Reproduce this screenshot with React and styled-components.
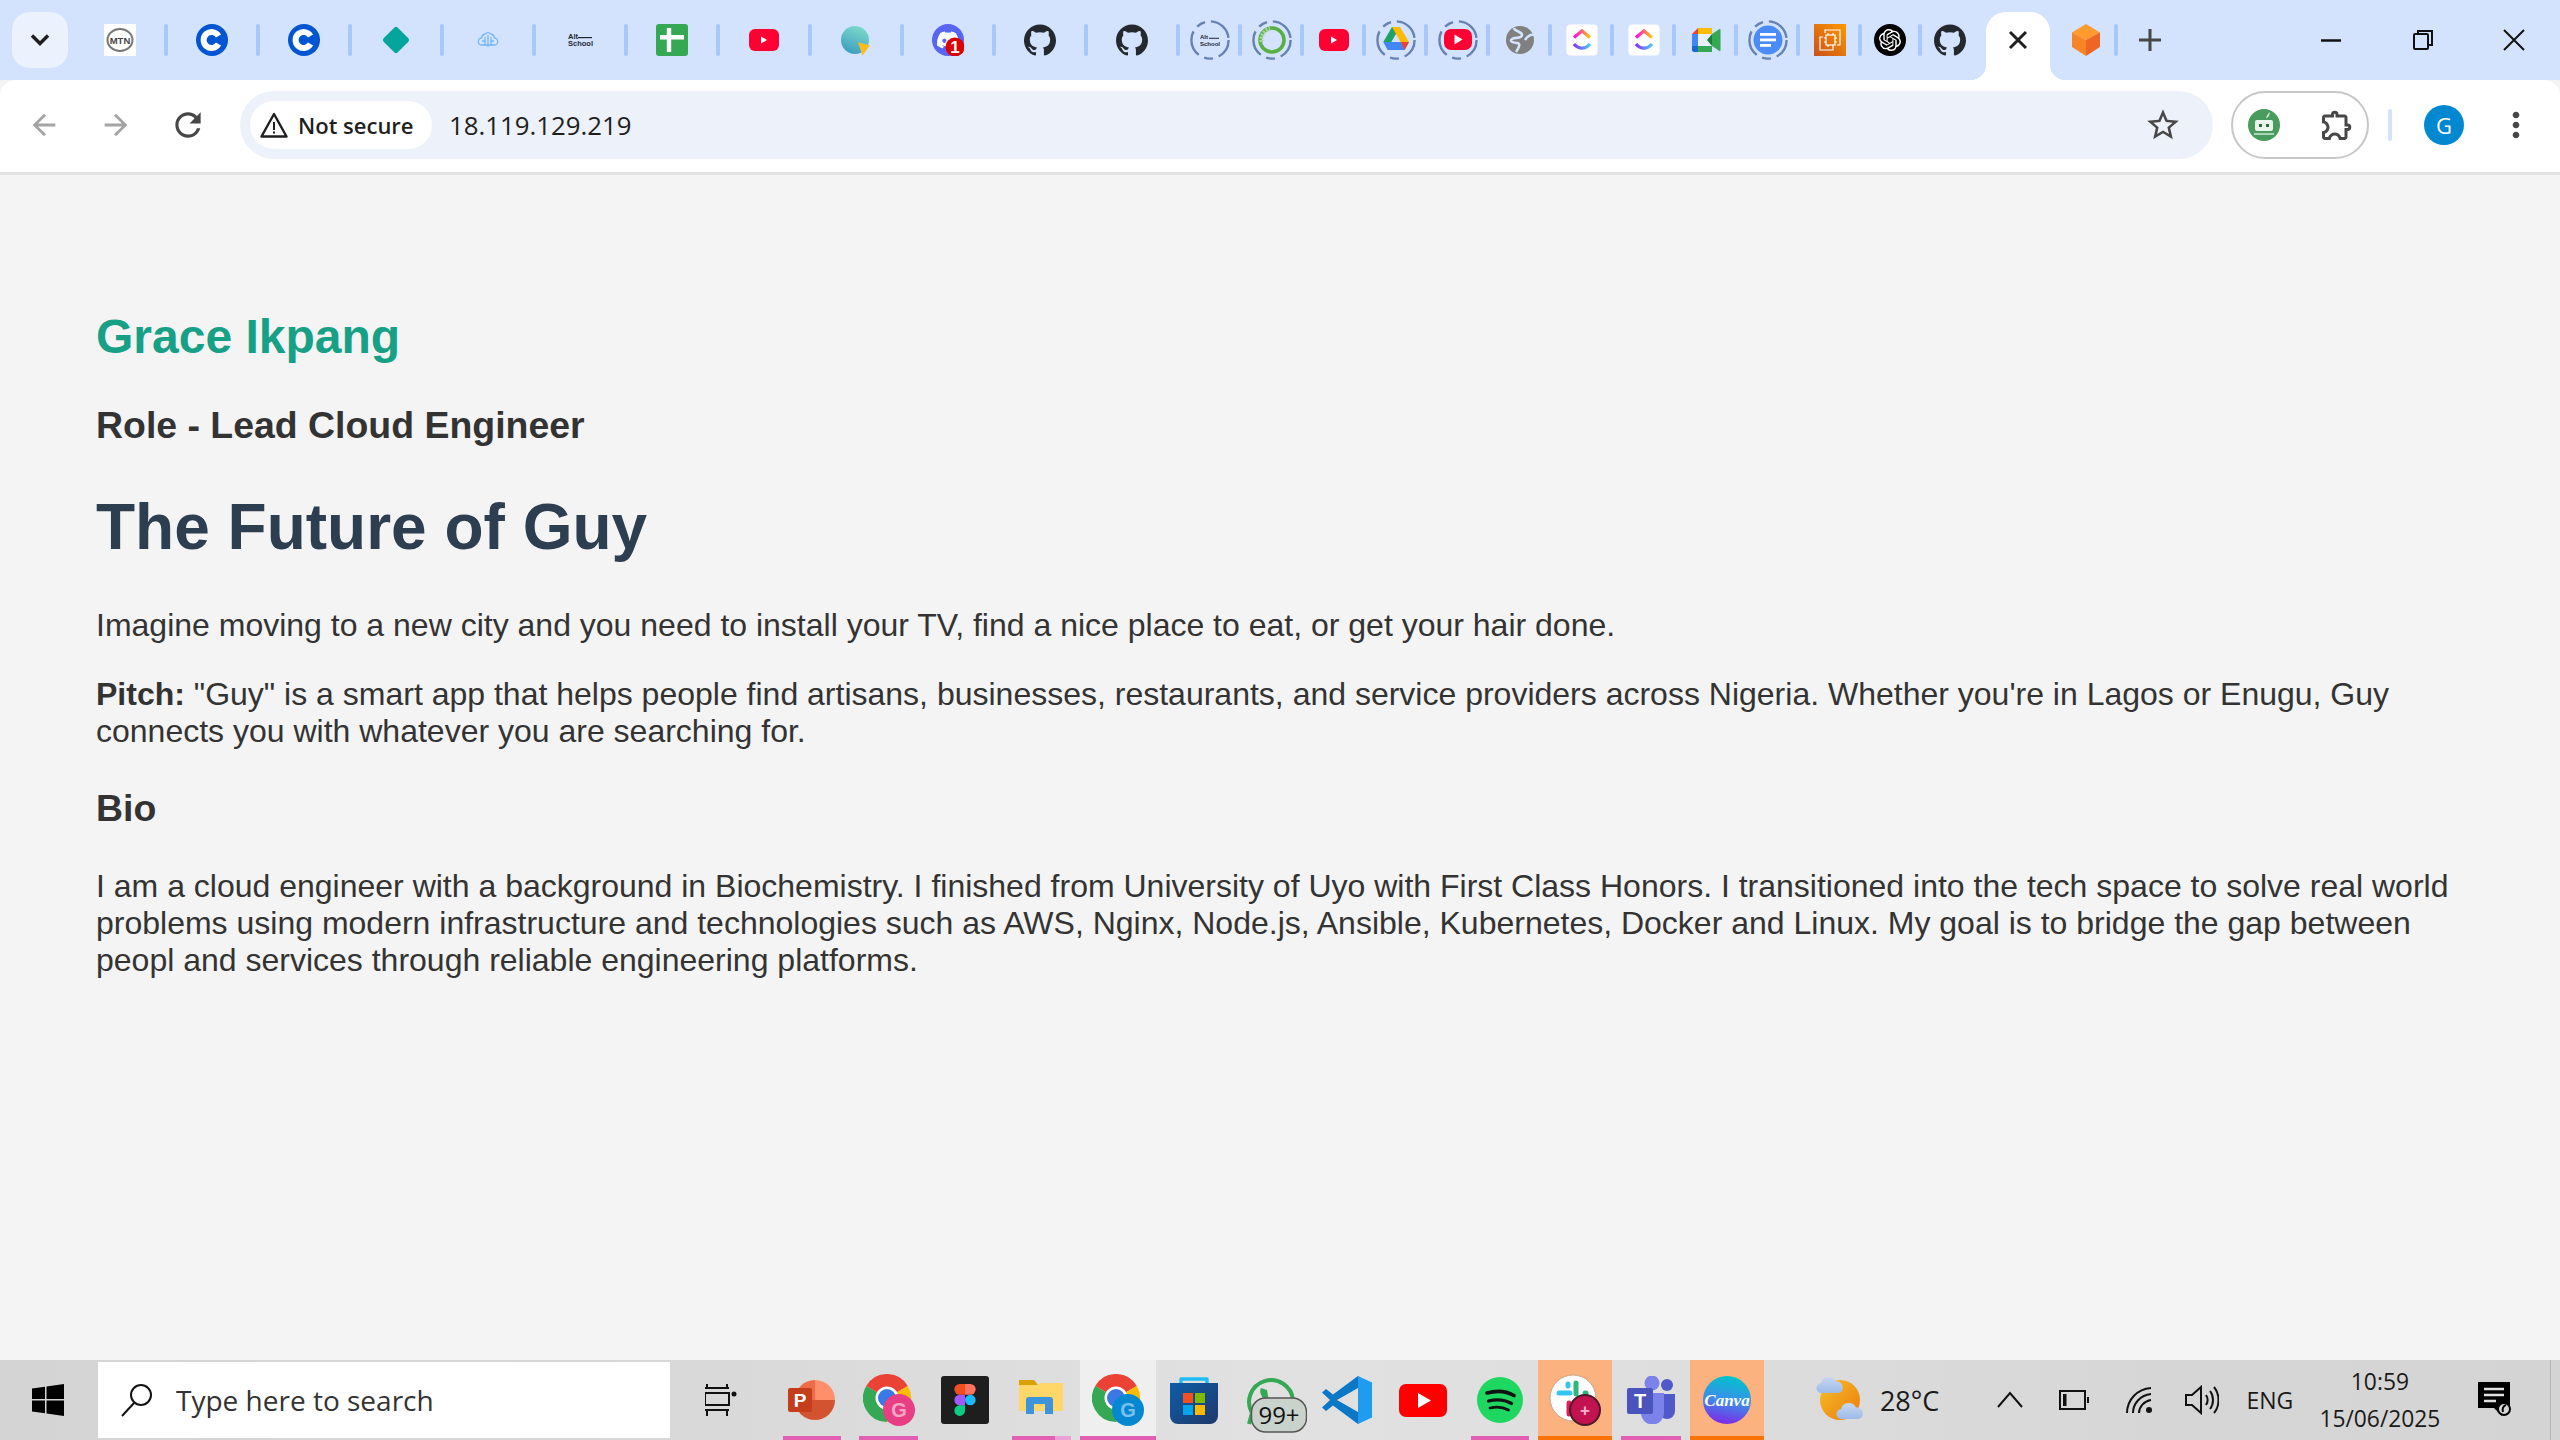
import React from 'react'
import styled, { createGlobalStyle } from 'styled-components'
import { SiGithub, SiOpenai, SiDiscord } from 'react-icons/si'
import { MdArrowBack, MdArrowForward, MdRefresh, MdStarBorder, MdOutlineExtension, MdMoreVert } from 'react-icons/md'

const UI_FONT = '"Open Sans", "Noto Sans", sans-serif'

const GlobalStyle = createGlobalStyle`
  html, body { margin: 0; padding: 0; height: 100%; overflow: hidden; }
  body { background: #f4f4f4; }
  #root { height: 100%; }
  * { box-sizing: border-box; }
`

const Screen = styled.div`
  display: flex;
  flex-direction: column;
  height: 1440px;
  width: 2560px;
`

/* ---- tab strip ---- */
const TabStrip = styled.div`
  display: flex;
  align-items: center;
  height: 80px;
  background: #d3e3fd;
  flex-shrink: 0;
`
const TabSearch = styled.div`
  width: 56px;
  height: 56px;
  margin: 0 8px 0 12px;
  border-radius: 18px;
  background: #ecf2fd;
  display: flex;
  align-items: center;
  justify-content: center;
`
const Tab = styled.div`
  width: ${p => p.$w || 58}px;
  margin-right: ${p => p.$mr || 0}px;
  padding-left: ${p => p.$pl || 0}px;
  height: 40px;
  display: flex;
  align-items: center;
  justify-content: center;
  flex-shrink: 0;
`
const TabSep = styled.div`
  width: 4px;
  height: 32px;
  border-radius: 2px;
  background: #a8c7fa;
  flex-shrink: 0;
`
const ActiveTab = styled.div`
  position: relative;
  width: 64px;
  height: 68px;
  margin-top: 12px;
  background: #fff;
  border-radius: 20px 20px 0 0;
  display: flex;
  align-items: center;
  justify-content: center;
  padding-bottom: 12px;
  flex-shrink: 0;
  &::before, &::after {
    content: '';
    position: absolute;
    bottom: 0;
    width: 16px;
    height: 16px;
  }
  &::before { left: -16px; background: radial-gradient(circle at 0 0, #d3e3fd 16px, #fff 16.5px); }
  &::after { right: -16px; background: radial-gradient(circle at 100% 0, #d3e3fd 16px, #fff 16.5px); }
`
const NewTab = styled.div`
  width: 64px;
  display: flex;
  justify-content: center;
`
const WindowControls = styled.div`
  display: flex;
  margin-left: auto;
`
const WindowButton = styled.div`
  width: 91.6px;
  height: 80px;
  display: flex;
  align-items: center;
  justify-content: center;
`

/* ---- toolbar ---- */
const Toolbar = styled.div`
  display: flex;
  align-items: center;
  height: 95px;
  padding: 0 0 3px 8px;
  background: #fff;
  border-bottom: 3px solid #e2e2e2;
  border-radius: 16px 16px 0 0;
  flex-shrink: 0;
`
const NavButton = styled.div`
  width: 72px;
  display: flex;
  justify-content: center;
  color: ${p => p.$dim ? '#a4a4a4' : '#474747'};
`
const Omnibox = styled.div`
  display: flex;
  align-items: center;
  width: 1973px;
  height: 68px;
  margin-left: 16px;
  padding: 0 31px 0 10px;
  border-radius: 34px;
  background: #edf2fa;
  flex-shrink: 0;
`
const SecurityChip = styled.div`
  display: flex;
  align-items: center;
  gap: 9px;
  width: 182px;
  height: 48px;
  padding-left: 9px;
  border-radius: 24px;
  background: #fff;
  font: 600 22px ${UI_FONT};
  color: #1f1f1f;
  white-space: nowrap;
`
const Url = styled.div`
  margin-left: 17px;
  font: 400 25.8px ${UI_FONT};
  color: #1f1f1f;
`
const StarWrap = styled.div`
  margin-left: auto;
  display: flex;
  color: #474747;
`
const ExtensionPill = styled.div`
  display: flex;
  align-items: center;
  width: 138px;
  height: 68px;
  margin-left: 18px;
  padding: 0 12px 0 15px;
  justify-content: space-between;
  border: 2px solid #c7c7c7;
  border-radius: 34px;
  color: #474747;
  flex-shrink: 0;
`
const ToolbarSep = styled.div`
  width: 4px;
  height: 32px;
  margin: 0 32px 0 19px;
  border-radius: 2px;
  background: #d3e3fd;
`
const Avatar = styled.div`
  width: 40px;
  height: 40px;
  border-radius: 50%;
  background: #0288d1;
  color: #fff;
  display: flex;
  align-items: center;
  justify-content: center;
  font: 400 22px ${UI_FONT};
`
const MenuButton = styled.div`
  display: flex;
  margin-left: 32px;
  color: #474747;
`

/* ---- page content ---- */
const Page = styled.main`
  flex: 1;
  padding: 94.5px 96px 0;
  background: #f4f4f4;
  font-family: "Liberation Sans", Arial, sans-serif;
  font-size: 32px;
  color: #333;
  overflow: hidden;
`
const Name = styled.h2`
  font-size: 48px;
  margin: 39.84px 0;
  color: #16a085;
`
const Subheading = styled.h3`
  font-size: 37.44px;
  margin: 37.44px 0;
  color: #333;
`
const Title = styled.h1`
  font-size: 64px;
  margin: 42.88px 0;
  color: #2c3e50;
`
const Paragraph = styled.p`
  margin: 32px 0;
`

/* ---- taskbar ---- */
const Taskbar = styled.footer`
  display: flex;
  height: 80px;
  flex-shrink: 0;
  background: linear-gradient(90deg, #d4d4d4 0%, #d8d8d8 25%, #e1e1e1 50%, #dfdfdf 62%, #d6d6d6 85%, #d4d4d4 100%);
`
const StartButton = styled.div`
  width: 98px;
  display: flex;
  align-items: center;
  justify-content: center;
  padding-right: 2px;
`
const SearchBox = styled.div`
  width: 572px;
  height: 76px;
  margin-top: 2px;
  background: #fff;
  display: flex;
  align-items: center;
  gap: 21px;
  padding-left: 21px;
  font: 400 28px ${UI_FONT};
  color: #333;
`
const TaskView = styled.div`
  width: 104px;
  display: flex;
  align-items: center;
  justify-content: center;
  padding-right: 2px;
`
const TaskSlot = styled.div`
  position: relative;
  width: ${p => p.$w || 76.4}px;
  height: 80px;
  display: flex;
  align-items: center;
  justify-content: center;
  background: ${p => p.$bg || 'transparent'};
  &::after {
    content: '';
    display: ${p => p.$line ? 'block' : 'none'};
    position: absolute;
    bottom: 0;
    left: ${p => p.$full ? 0 : '9px'};
    right: ${p => p.$full ? 0 : '9px'};
    height: 4px;
    background: ${p => p.$tail ? 'linear-gradient(90deg, #e25fb4 73%, #eda0d6 73%)' : p.$line};
  }
`
const Weather = styled.div`
  display: flex;
  align-items: center;
  gap: 16px;
  margin-left: 52px;
  width: 162px;
  font: 400 27px ${UI_FONT};
  color: #1a1a1a;
`
const TrayItem = styled.div`
  width: ${p => p.$w}px;
  display: flex;
  align-items: center;
  justify-content: center;
  font: 400 23px ${UI_FONT};
  color: #1a1a1a;
`
const Clock = styled.div`
  width: 144px;
  display: flex;
  flex-direction: column;
  align-items: center;
  justify-content: center;
  font: 400 22.8px/37px ${UI_FONT};
  color: #1a1a1a;
`
const ShowDesktop = styled.div`
  flex: 1;
  margin-left: 14px;
  border-left: 1px solid #b4b4b4;
`

/* ---- tab icons, 32px unless noted ---- */
const Mtn = () => (
  <svg width="32" height="32" viewBox="0 0 32 32">
    <rect width="32" height="32" fill="#fff" />
    <ellipse cx="16" cy="16" rx="12.5" ry="11" fill="none" stroke="#777" strokeWidth="2" />
    <text x="16" y="19.5" textAnchor="middle" fontFamily="Liberation Sans" fontWeight="700" fontSize="9.5" fill="#444">MTN</text>
  </svg>
)
const Coursera = () => (
  <svg width="32" height="32" viewBox="0 0 32 32">
    <circle cx="16" cy="16" r="16" fill="#0056d2" />
    <path d="M22.5 12 A8 8 0 1 0 22.5 20" fill="none" stroke="#fff" strokeWidth="6" />
  </svg>
)
const Diamond = () => (
  <svg width="32" height="32" viewBox="0 0 32 32">
    <rect x="6" y="6" width="20" height="20" rx="2.5" fill="#04a59d" transform="rotate(45 16 16)" />
  </svg>
)
const BrainCloud = () => (
  <svg width="32" height="32" viewBox="0 0 32 32" fill="none" stroke="#74b6f8" strokeWidth="1.3">
    <path d="M10 21a3.500 3.500 0 0 1-.5-7 4.500 4.500 0 0 1 3.500-4 4 4 0 0 1 6 0 4.500 4.500 0 0 1 3.500 4 3.500 3.500 0 0 1-.5 7z" />
    <path d="M13 13v9M16 11v12M19 13v9M10 17h3M19 17h3" />
  </svg>
)
const AltSchoolText = ({ size = 32 }) => (
  <svg width={size} height={size} viewBox="0 0 32 32">
    <text x="4" y="14.5" fontFamily="Liberation Sans" fontWeight="700" fontSize="7.5" fill="#1d2733">Alt</text>
    <rect x="14" y="13" width="14" height="1.2" fill="#1d2733" />
    <text x="4" y="22" fontFamily="Liberation Sans" fontWeight="700" fontSize="7.5" fill="#1d2733">School</text>
  </svg>
)
const GreenPlus = () => (
  <svg width="32" height="32" viewBox="0 0 32 32">
    <rect width="32" height="32" rx="3" fill="#34a853" />
    <path d="M10.8 4h4.4v7h12.8v4.4H15.2V28h-4.4V15.4H4V11h6.8z" fill="#fff" />
  </svg>
)
const SmallYoutube = ({ w = 32 }) => (
  <svg width={w} height="32" viewBox="0 0 32 32">
    <rect x="1" y="5" width="30" height="22" rx="6" fill="#ff0033" />
    <path d="M13 12.5l6 3.5-6 3.5z" fill="#fff" />
  </svg>
)
const TealOrb = () => (
  <svg width="32" height="32" viewBox="0 0 32 32">
    <defs>
      <linearGradient id="orb" x1="0.7" y1="0" x2="0.3" y2="1">
        <stop offset="0" stopColor="#7edbcb" />
        <stop offset="1" stopColor="#3b9cc0" />
      </linearGradient>
    </defs>
    <circle cx="15" cy="16" r="14" fill="url(#orb)" />
    <path d="M18 18l12 3.5-7.5 10z" fill="#fdbb1e" />
  </svg>
)
const Discord = () => (
  <svg width="32" height="32" viewBox="0 0 32 32">
    <circle cx="16" cy="16" r="16" fill="#5865f2" />
    <SiDiscord x="5" y="5" size="22" color="#fff" />
    <circle cx="23" cy="23" r="9.5" fill="#dc0000" />
    <text x="23" y="29" textAnchor="middle" fontFamily="Liberation Sans" fontWeight="700" fontSize="17" fill="#fff">1</text>
  </svg>
)
const Github = () => <SiGithub size={32} color="#24292f" />

// dashed ring used for tab groups
const Ring = ({ children }) => (
  <svg width="40" height="40" viewBox="0 0 40 40">
    <circle cx="20" cy="20" r="18.6" fill="none" stroke="#6582b2" strokeWidth="2.4" strokeDasharray="26 6 9 6" strokeDashoffset="6" />
    {children}
  </svg>
)
const RingAlt = () => (
  <Ring>
    <text x="10" y="19" fontFamily="Liberation Sans" fontWeight="700" fontSize="6" fill="#1d2733">Alt</text>
    <rect x="19" y="17.8" width="10" height="1" fill="#1d2733" />
    <text x="10" y="25.5" fontFamily="Liberation Sans" fontWeight="700" fontSize="6" fill="#1d2733">School</text>
  </Ring>
)
const RingGreen = () => (
  <Ring>
    <circle cx="20" cy="20" r="12" fill="none" stroke="#58b044" strokeWidth="3.6" />
    <path d="M9.5 22 A12 12 0 0 1 18 8.5" fill="none" stroke="#a8d49c" strokeWidth="4" strokeDasharray="2 1.2" />
  </Ring>
)
const RingDrive = () => (
  <Ring>
    <path d="M16 7h8l-8.7 15h-8z" fill="#1ea362" />
    <path d="M16 7h8l9 15h-8.3z" fill="#ffba00" />
    <path d="M7.3 22H33l-4.4 8H11.6z" fill="#4285f4" />
    <path d="M24.7 22H33l-4.4 8z" fill="#ea4335" />
  </Ring>
)
const RingYoutube = () => (
  <Ring>
    <rect x="6" y="9" width="28" height="21" rx="7" fill="#ff0033" />
    <path d="M16.5 14.5l8 5-8 5z" fill="#fff" />
  </Ring>
)
const GrayGlobe = () => (
  <svg width="32" height="32" viewBox="0 0 32 32">
    <circle cx="16" cy="16" r="14" fill="#808080" />
    <path d="M10 4c1 4 8 3 8 7s-7 2-10 4 1 4 5 4 2 5-1 9M30 11c-4-1-7 2-9 5" fill="none" stroke="#d3e3fd" strokeWidth="2.600" />
  </svg>
)
const ClickUp = () => (
  <svg width="32" height="32" viewBox="0 0 32 32">
    <defs>
      <linearGradient id="cuTop" x1="0" y1="0" x2="1" y2="0">
        <stop offset="0" stopColor="#ff02f0" />
        <stop offset="1" stopColor="#ffc800" />
      </linearGradient>
      <linearGradient id="cuBottom" x1="0" y1="0" x2="1" y2="0">
        <stop offset="0" stopColor="#8930fd" />
        <stop offset="1" stopColor="#49ccf9" />
      </linearGradient>
    </defs>
    <rect x="0.5" y="0.5" width="31" height="31" rx="4" fill="#fff" />
    <path d="M8 13.500l8-6.500 8 6.500" fill="none" stroke="url(#cuTop)" strokeWidth="3.400" />
    <path d="M8 20c4.500 5.500 11.500 5.500 16 0" fill="none" stroke="url(#cuBottom)" strokeWidth="3.400" />
  </svg>
)
const Meet = () => (
  <svg width="32" height="32" viewBox="0 0 32 32">
    <rect x="8" y="10" width="14" height="12" fill="#e8f0fd" />
    <path d="M2 10h6v12H2z" fill="#4285f4" />
    <path d="M8 4h14v6H8z" fill="#fbbc04" />
    <path d="M8 4v6H2z" fill="#ea4335" />
    <path d="M2 22h6v6H4a2 2 0 0 1-2-2z" fill="#1967d2" />
    <path d="M8 22h14v6H8z" fill="#34a853" />
    <path d="M22 10l7.500-5q1-.5 1 1v20q0 1.500-1 1L22 22z" fill="#34a853" />
    <path d="M22 10v12l-5-6z" fill="#188038" />
  </svg>
)
const RingDocs = () => (
  <Ring>
    <circle cx="20" cy="20" r="14.500" fill="#4b8bf5" />
    <rect x="12" y="13" width="16" height="2.800" fill="#fff" />
    <rect x="12" y="18.500" width="16" height="2.800" fill="#fff" />
    <rect x="12" y="24" width="11" height="2.800" fill="#fff" />
  </Ring>
)
const Ec2 = () => (
  <svg width="32" height="32" viewBox="0 0 32 32">
    <defs>
      <linearGradient id="ec2" x1="0" y1="1" x2="1" y2="0">
        <stop offset="0" stopColor="#c8511b" />
        <stop offset="1" stopColor="#ff9900" />
      </linearGradient>
    </defs>
    <rect width="32" height="32" fill="url(#ec2)" />
    <g fill="none" stroke="#fff" strokeWidth="1.200">
      <path d="M11 9V6h15v15h-3M9 13H6v13h13v-3" />
      <rect x="12" y="11" width="9" height="10" />
      <path d="M14 9v2M19 9v2M14 21v2M19 21v2M10 14h2M10 18h2M21 14h2M21 18h2" />
    </g>
  </svg>
)
const OpenAi = () => (
  <svg width="32" height="32" viewBox="0 0 32 32">
    <circle cx="16" cy="16" r="16" fill="#000" />
    <SiOpenai x="5" y="5" size="22" color="#fff" />
  </svg>
)
const Cube = () => (
  <svg width="32" height="32" viewBox="0 0 32 32">
    <path d="M16 0l14 8.500L16 16 2 8.500z" fill="#ff9a2c" />
    <path d="M2 8.500L16 16v16L2 23z" fill="#f78427" />
    <path d="M30 8.500L16 16v16l14-9z" fill="#ef6523" />
  </svg>
)

/* ---- taskbar icons, 48px ---- */
const Powerpoint = () => (
  <svg width="48" height="48" viewBox="0 0 48 48">
    <path d="M27 4a20 20 0 0 1 20 20H27z" fill="#ff8f6b" />
    <path d="M27 4a20 20 0 0 0-20 20h20z" fill="#ed6c47" />
    <path d="M7 24a20 20 0 0 0 40 0z" fill="#d35230" />
    <rect x="0" y="12" width="24" height="24" rx="2" fill="#c43e1c" />
    <text x="12" y="31" textAnchor="middle" fontFamily="Liberation Sans" fontWeight="700" fontSize="19" fill="#fff">P</text>
  </svg>
)
const ChromeProfile = ({ color, text }) => (
  <svg width="52" height="52" viewBox="0 0 52 52">
    <path d="M24 24L3.200 12A24 24 0 0 1 44.800 12z" fill="#ea4335" />
    <path d="M24 24L44.800 12A24 24 0 0 1 24 48z" fill="#fbbc04" />
    <path d="M24 24L24 48A24 24 0 0 1 3.200 12z" fill="#34a853" />
    <circle cx="24" cy="24" r="11.500" fill="#fff" />
    <circle cx="24" cy="24" r="9" fill="#3b78e7" />
    <circle cx="36" cy="36" r="16" fill={color} />
    <text x="36" y="43" textAnchor="middle" fontFamily="Liberation Sans" fontWeight="700" fontSize="20" fill={text}>G</text>
  </svg>
)
const Figma = () => (
  <svg width="48" height="48" viewBox="0 0 48 48">
    <rect width="48" height="48" rx="3" fill="#1e1e1e" />
    <path d="M24 8h-5.300a5.300 5.300 0 0 0 0 10.700H24z" fill="#f24e1e" />
    <path d="M24 8h5.300a5.300 5.300 0 0 1 0 10.700H24z" fill="#ff7262" />
    <path d="M24 18.700h-5.300a5.300 5.300 0 0 0 0 10.700H24z" fill="#a259ff" />
    <circle cx="29.300" cy="24" r="5.300" fill="#1abcfe" />
    <path d="M24 29.300h-5.300a5.300 5.300 0 1 0 5.300 5.300z" fill="#0acf83" />
  </svg>
)
const Explorer = () => (
  <svg width="44" height="44" viewBox="0 0 44 44">
    <path d="M0 2h15l4 5h-19z" fill="#d9a200" />
    <path d="M0 7h19l3-2h22v26a2 2 0 0 1-2 2H2a2 2 0 0 1-2-2z" fill="#ffd769" />
    <path d="M7 36V22a3 3 0 0 1 3-3h21a3 3 0 0 1 3 3v14h-8v-10h-11v10z" fill="#3d93dc" />
  </svg>
)
const Store = () => (
  <svg width="48" height="48" viewBox="0 0 48 48">
    <defs>
      <linearGradient id="storeBag" x1="0" y1="0" x2="1" y2="1">
        <stop offset="0" stopColor="#0d5ea8" />
        <stop offset="1" stopColor="#21376b" />
      </linearGradient>
    </defs>
    <path d="M11 10V3h26v7" fill="none" stroke="#1ebcf5" strokeWidth="3.400" strokeLinejoin="round" />
    <path d="M0 7h48v33a8 8 0 0 1-8 8H8a8 8 0 0 1-8-8z" fill="url(#storeBag)" />
    <rect x="13" y="17" width="10" height="10" fill="#f25022" />
    <rect x="25" y="17" width="10" height="10" fill="#7fba00" />
    <rect x="13" y="29" width="10" height="10" fill="#00a4ef" />
    <rect x="25" y="29" width="10" height="10" fill="#ffb900" />
  </svg>
)
const Whatsapp = () => (
  <svg width="72" height="66" viewBox="0 0 72 66">
    <path d="M14 57l3-11A22 22 0 1 1 58 33" fill="none" stroke="#36a853" strokeWidth="4" />
    <path d="M26 21c-2 3 0 8 3 11l5 3-2-12z" fill="#36a853" />
    <rect x="16.500" y="31" width="55" height="34" rx="14" fill="#c9d3cb" stroke="#555" strokeWidth="1.500" />
    <text x="44" y="57" textAnchor="middle" fontFamily='"Open Sans"' fontWeight="400" fontSize="24" fill="#111">99+</text>
  </svg>
)
const VsCode = () => (
  <svg width="50" height="48" viewBox="0 0 50 48">
    <path d="M36 0l14 6.500v35L36 48z" fill="#1f9cf0" />
    <path d="M36 0v12L15 24 36 36v12L11 29.500 4 35 0 31.500 8 24 0 16.500 4 13l7 5.500z" fill="#0a78c6" />
  </svg>
)
const BigYoutube = () => (
  <svg width="48" height="48" viewBox="0 0 48 48">
    <rect x="0" y="8" width="48" height="33" rx="7" fill="#ff0000" />
    <path d="M19 17l13 7.500L19 32z" fill="#fff" />
  </svg>
)
const Spotify = () => (
  <svg width="46" height="46" viewBox="0 0 46 46">
    <circle cx="23" cy="23" r="23" fill="#1ed760" />
    <g fill="none" stroke="#121212" strokeLinecap="round">
      <path d="M10 16c9-2.500 19-2 27 2.500" strokeWidth="3.600" />
      <path d="M11.500 24c8-2 16-1.500 23 2.500" strokeWidth="3.200" />
      <path d="M13 31c6.500-1.500 13-1 18.500 2" strokeWidth="2.700" />
    </g>
  </svg>
)
const Slack = () => (
  <svg width="52" height="52" viewBox="0 0 52 52">
    <circle cx="24" cy="24" r="23" fill="#fff" stroke="#c9a58a" strokeWidth="1" />
    <g strokeWidth="5" strokeLinecap="round" fill="none">
      <path d="M10 19h11" stroke="#36c5f0" />
      <path d="M27 9v11" stroke="#2eb67d" />
      <path d="M38 27H28" stroke="#ecb22e" />
      <path d="M20 29v11" stroke="#e01e5a" />
      <path d="M19 10v2" stroke="#36c5f0" />
      <path d="M36 19h1" stroke="#2eb67d" />
    </g>
    <circle cx="36" cy="36" r="15" fill="#c2124f" stroke="#4a1a28" strokeWidth="2" />
    <text x="36" y="42" textAnchor="middle" fontFamily="Liberation Sans" fontWeight="700" fontSize="17" fill="#f7b4cb">+</text>
  </svg>
)
const Teams = () => (
  <svg width="48" height="48" viewBox="0 0 48 48">
    <circle cx="40" cy="9" r="6" fill="#5059c9" />
    <path d="M32 18h16v17a8 8 0 0 1-16 0z" fill="#5059c9" />
    <circle cx="25" cy="7" r="7.500" fill="#7b83eb" />
    <path d="M14 17h23v20a11.500 11.500 0 0 1-23 0z" fill="#7b83eb" />
    <rect x="0" y="12" width="26" height="26" rx="2" fill="#4b53bc" />
    <text x="13" y="32" textAnchor="middle" fontFamily="Liberation Sans" fontWeight="700" fontSize="20" fill="#fff">T</text>
  </svg>
)
const Canva = () => (
  <svg width="48" height="48" viewBox="0 0 48 48">
    <defs>
      <linearGradient id="canva" x1="0.6" y1="0" x2="0.4" y2="1">
        <stop offset="0" stopColor="#00c4cc" />
        <stop offset="0.5" stopColor="#3a8fe8" />
        <stop offset="1" stopColor="#7d2ae8" />
      </linearGradient>
    </defs>
    <circle cx="24" cy="24" r="24" fill="url(#canva)" />
    <text x="24" y="29.500" textAnchor="middle" fontFamily="Liberation Serif" fontStyle="italic" fontWeight="700" fontSize="17" fill="#fff">Canva</text>
  </svg>
)
const WeatherIcon = () => (
  <svg width="48" height="48" viewBox="0 0 48 48">
    <defs>
      <linearGradient id="sun" x1="0" y1="0" x2="1" y2="1">
        <stop offset="0" stopColor="#f5c02a" />
        <stop offset="1" stopColor="#ee7a0c" />
      </linearGradient>
      <linearGradient id="cloud" x1="0" y1="0" x2="0" y2="1">
        <stop offset="0" stopColor="#c6d8f2" />
        <stop offset="1" stopColor="#9dbbe8" />
      </linearGradient>
    </defs>
    <circle cx="24" cy="24" r="20" fill="url(#sun)" />
    <path id="cloudTop" d="M6 17a5 5 0 0 1-1-10 8 8 0 0 1 15-1.500A6 6 0 0 1 23 17z" fill="url(#cloud)" />
    <path d="M26 43a5 5 0 0 1-1-10 8 8 0 0 1 15-1.500A6 6 0 0 1 43 43z" fill="url(#cloud)" />
  </svg>
)

const tabs = [
  [<Mtn />, 88], [<Coursera />, 88], [<Coursera />, 88], [<Diamond />, 88], [<BrainCloud />, 88], [<AltSchoolText />, 88],
  [<GreenPlus />, 88], [<SmallYoutube />, 88], [<TealOrb />, 88], [<Discord />, 88], [<Github />, 88], [<Github />, 88],
  [<RingAlt />, 58, 2], [<RingGreen />, 58, 2], [<SmallYoutube />, 58, 2], [<RingDrive />, 58, 2], [<RingYoutube />, 58, 2], [<GrayGlobe />, 58, 2],
  [<ClickUp />, 58, 2], [<ClickUp />, 58, 2], [<Meet />, 58, 2], [<RingDocs />, 58, 2], [<Ec2 />, 58, 2], [<OpenAi />, 56],
]

const slots = [
  { icon: <Powerpoint />, line: '#e25fb4' },
  { icon: <ChromeProfile color="#e83e83" text="#f5a6c6" />, line: '#e25fb4' },
  { icon: <Figma /> },
  { icon: <Explorer />, line: '#e25fb4', tail: true },
  { icon: <ChromeProfile color="#0688d1" text="#7cc0ec" />, line: '#e25fb4', bg: '#efefef', full: true },
  { icon: <Store /> },
  { icon: <Whatsapp /> },
  { icon: <VsCode /> },
  { icon: <BigYoutube /> },
  { icon: <Spotify />, line: '#e25fb4' },
  { icon: <Slack />, line: '#f97306', bg: '#fbb27e', full: true, w: 74 },
  { icon: <Teams />, line: '#e25fb4', w: 78 },
  { icon: <Canva />, line: '#f97306', bg: '#fbb27e', full: true, w: 74 },
]

export default function App() {
  return (
    <Screen>
      <GlobalStyle />
      <TabStrip>
        <TabSearch>
          <svg width="20" height="14" viewBox="0 0 20 14"><path d="M2 2.500l8 8 8-8" fill="none" stroke="#1f1f1f" strokeWidth="3.500" /></svg>
        </TabSearch>
        {tabs.map(([icon, w, pl], i) => (
          <React.Fragment key={i}>
            <Tab $w={w} $pl={pl}>{icon}</Tab>
            <TabSep />
          </React.Fragment>
        ))}
        <Tab $w={56} $mr={8}><Github /></Tab>
        <ActiveTab>
          <svg width="22" height="22" viewBox="0 0 22 22"><path d="M3 3l16 16M19 3L3 19" stroke="#1f1f1f" strokeWidth="3" /></svg>
        </ActiveTab>
        <Tab $w={64} $pl={8}><Cube /></Tab>
        <TabSep />
        <NewTab>
          <svg width="22" height="22" viewBox="0 0 22 22"><path d="M11 0v22M0 11h22" stroke="#474747" strokeWidth="3" /></svg>
        </NewTab>
        <WindowControls>
          <WindowButton>
            <svg width="20" height="3" viewBox="0 0 20 3"><path d="M0 1.500h20" stroke="#111" strokeWidth="2.500" /></svg>
          </WindowButton>
          <WindowButton>
            <svg width="20" height="20" viewBox="0 0 20 20" fill="none" stroke="#111" strokeWidth="2"><rect x="1" y="4" width="14" height="15" rx="1" /><path d="M5 4V1h14v14h-4" /></svg>
          </WindowButton>
          <WindowButton>
            <svg width="22" height="22" viewBox="0 0 22 22"><path d="M1 1l20 20M21 1L1 21" stroke="#111" strokeWidth="2" /></svg>
          </WindowButton>
        </WindowControls>
      </TabStrip>

      <Toolbar>
        <NavButton $dim><MdArrowBack size={34} /></NavButton>
        <NavButton $dim><MdArrowForward size={34} /></NavButton>
        <NavButton><MdRefresh size={38} /></NavButton>
        <Omnibox>
          <SecurityChip>
            <svg width="30" height="28" viewBox="0 0 30 28" fill="none" stroke="#1f1f1f" strokeWidth="2.400">
              <path d="M15 3L2.500 25.500h25z" strokeLinejoin="round" />
              <path d="M15 11v8M15 20.500v2" strokeWidth="2" />
            </svg>
            Not secure
          </SecurityChip>
          <Url>18.119.129.219</Url>
          <StarWrap><MdStarBorder size={38} /></StarWrap>
        </Omnibox>
        <ExtensionPill>
          <svg width="32" height="32" viewBox="0 0 32 32">
            <circle cx="16" cy="16" r="16" fill="#499c5e" />
            <path d="M18 9c1-3 2.500-5 4-6-.5 2.500-1 4.500-3 6z" fill="#d5ecd8" />
            <rect x="7" y="11" width="18" height="11" rx="2" fill="#e9f5eb" />
            <rect x="11" y="15" width="3" height="3" fill="#2c6c3d" />
            <rect x="18" y="15" width="3" height="3" fill="#2c6c3d" />
            <path d="M6 25h20" stroke="#cfe8d3" strokeWidth="1.500" />
          </svg>
          <MdOutlineExtension size={36} />
        </ExtensionPill>
        <ToolbarSep />
        <Avatar>G</Avatar>
        <MenuButton><MdMoreVert size={40} /></MenuButton>
      </Toolbar>

      <Page>
        <Name>Grace Ikpang</Name>
        <Subheading>Role - Lead Cloud Engineer</Subheading>
        <Title>The Future of Guy</Title>
        <Paragraph>Imagine moving to a new city and you need to install your TV, find a nice place to eat, or get your hair done.</Paragraph>
        <Paragraph><strong>Pitch:</strong> "Guy" is a smart app that helps people find artisans, businesses, restaurants, and service providers across Nigeria. Whether you're in Lagos or Enugu, Guy connects you with whatever you are searching for.</Paragraph>
        <Subheading>Bio</Subheading>
        <Paragraph>I am a cloud engineer with a background in Biochemistry. I finished from University of Uyo with First Class Honors. I transitioned into the tech space to solve real world problems using modern infrastructure and technologies such as AWS, Nginx, Node.js, Ansible, Kubernetes, Docker and Linux. My goal is to bridge the gap between peopl and services through reliable engineering platforms.</Paragraph>
      </Page>

      <Taskbar>
        <StartButton>
          <svg width="32" height="32" viewBox="0 0 32 32" fill="#000">
            <path d="M0 4.500l13-1.800V15H0zM14.500 2.500L32 0v15H14.500zM0 16.500h13v12.800L0 27.500zM14.500 16.500H32V32l-17.500-2.500z" />
          </svg>
        </StartButton>
        <SearchBox>
          <svg width="36" height="36" viewBox="0 0 36 36" fill="none" stroke="#111" strokeWidth="2">
            <circle cx="22" cy="13" r="10" />
            <path d="M15 21L3 34" />
          </svg>
          Type here to search
        </SearchBox>
        <TaskView>
          <svg width="32" height="32" viewBox="0 0 32 32" fill="none" stroke="#111" strokeWidth="2">
            <path d="M2 0v4M22 0v4M0 4h24M0 9h24v12H0zM0 26h24M2 26v6M22 26v6" />
            <circle cx="29" cy="10" r="2.500" fill="#111" stroke="none" />
          </svg>
        </TaskView>
        {slots.map((s, i) => (
          <TaskSlot key={i} $line={s.line} $tail={s.tail} $bg={s.bg} $full={s.full} $w={s.w}>{s.icon}</TaskSlot>
        ))}
        <Weather>
          <WeatherIcon />
          28°C
        </Weather>
        <TrayItem $w={64}>
          <svg width="26" height="18" viewBox="0 0 26 18"><path d="M1 16L13 2l12 14" fill="none" stroke="#111" strokeWidth="2" /></svg>
        </TrayItem>
        <TrayItem $w={64}>
          <svg width="30" height="20" viewBox="0 0 30 20" fill="none" stroke="#111" strokeWidth="2"><rect x="1" y="1" width="25" height="18" /><rect x="4" y="4" width="3.500" height="12" fill="#111" stroke="none" /><path d="M29 7v6" /></svg>
        </TrayItem>
        <TrayItem $w={66}>
          <svg width="28" height="28" viewBox="0 0 28 28" fill="none" stroke="#111" strokeWidth="2"><path d="M2 27C2 14 12 3 26 2M8 27C8 18 15 9 26 8M14 27c0-6 5-12 12-13" /><circle cx="24" cy="24" r="3" fill="#111" stroke="none" /></svg>
        </TrayItem>
        <TrayItem $w={60}>
          <svg width="34" height="30" viewBox="0 0 34 30" fill="none" stroke="#111" strokeWidth="2"><path d="M1 10h6l9-8v26l-9-8H1zM21 10c2 3 2 7 0 10M25 6c4 5 4 13 0 18M29 2c6 7 6 19 0 26" /></svg>
        </TrayItem>
        <TrayItem $w={76}>ENG</TrayItem>
        <Clock>
          <span>10:59</span>
          <span>15/06/2025</span>
        </Clock>
        <TrayItem $w={84}>
          <svg width="36" height="36" viewBox="0 0 36 36">
            <path d="M2 0h32v26H26v8l-8-8H2z" fill="#000" />
            <path d="M8 7h20M8 13h20M8 19h12" stroke="#e0e0e0" strokeWidth="2.500" />
            <circle cx="28" cy="27" r="6" fill="#d6d6d6" stroke="#000" strokeWidth="2" />
            <path d="M30 23c-3 1-4 4-3 7" fill="none" stroke="#000" strokeWidth="2" />
          </svg>
        </TrayItem>
        <ShowDesktop />
      </Taskbar>
    </Screen>
  )
}
